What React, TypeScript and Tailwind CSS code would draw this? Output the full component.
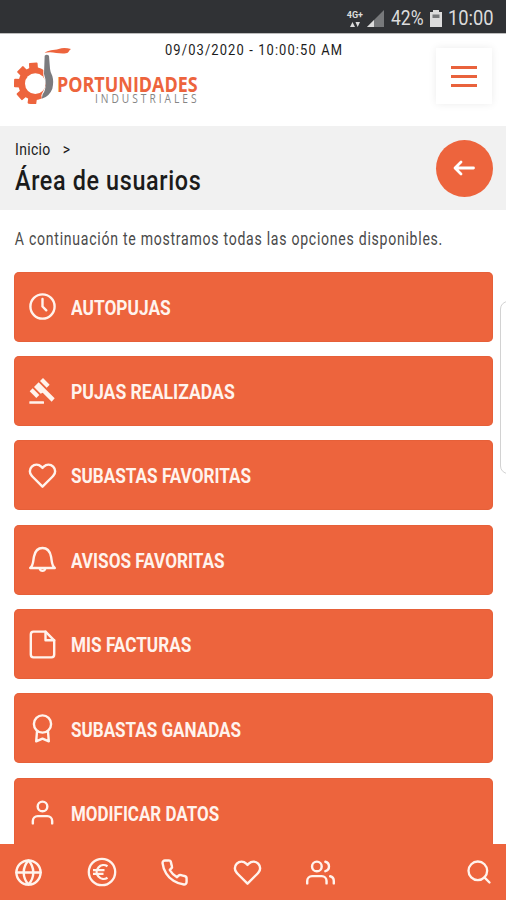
import type { ReactNode } from 'react';
import { FiGlobe, FiHeart, FiPhone, FiSearch, FiUser, FiUsers } from 'react-icons/fi';

function LineIcon({ children }: { children: ReactNode }) {
  return (
    <svg
      viewBox="0 0 29 29"
      className="size-[29px]"
      fill="none"
      stroke="currentColor"
      strokeWidth="2.4"
      strokeLinecap="round"
      strokeLinejoin="round"
    >
      {children}
    </svg>
  );
}

function ClockIcon() {
  return (
    <LineIcon>
      <circle cx="14.5" cy="14.5" r="12.1" />
      <path d="M14.5 7V14.5L18.3 18.3" />
    </LineIcon>
  );
}

function GavelIcon() {
  return (
    <svg viewBox="0 0 81 84" className="h-7 w-[27px]" fill="currentColor">
      <path d="M33 12 42 3 62 23 53 32Z" />
      <path d="M2 43 11 34 31 54 22 63Z" />
      <path d="M15 30 29 16 49 36 77 64 68 74 41 47 35 50Z" />
      <rect x="1" y="73" width="44" height="7" rx="1.5" />
    </svg>
  );
}

function HeartIcon() {
  return <FiHeart size={29} />;
}

function BellIcon() {
  return (
    <LineIcon>
      <path d="M2.2 23H26.8C23.5 20.5 24 16 23 11.5C22 6.5 19 3 14.5 3C10 3 7 6.5 6 11.5C5 16 5.5 20.5 2.2 23Z" />
      <path d="M11.8 23.8A2.8 2.8 0 0 0 17.2 23.8" />
    </LineIcon>
  );
}

function FileIcon() {
  return (
    <LineIcon>
      <path d="M17.5 1.6H5.5A2.8 2.8 0 0 0 2.8 4.4V24.6A2.8 2.8 0 0 0 5.5 27.4H23.5A2.8 2.8 0 0 0 26.2 24.6V10.3Z" />
      <path d="M17.5 1.6V10.3H26.2" />
    </LineIcon>
  );
}

function AwardIcon() {
  return (
    <LineIcon>
      <circle cx="14.5" cy="10" r="8.6" />
      <path d="M9 17.5 8.2 27.3 14.5 24.6 20.8 27.3 20 17.5" />
    </LineIcon>
  );
}

function UserIcon() {
  return <FiUser size={29} />;
}

function EuroIcon() {
  return (
    <svg viewBox="0 0 30 30" className="size-[30px]" fill="none" stroke="currentColor" strokeWidth="2.3">
      <circle cx="15" cy="15" r="13.2" />
      <path d="M20.5 9.3A6.9 6.9 0 1 0 20.5 20.7M6 13.2H17.5M6 16.8H16.5" />
    </svg>
  );
}

function Logo() {
  return (
    <div className="flex h-[58px]">
      <svg viewBox="12 12 174 174" className="size-[58px] shrink-0">
        <g fill="#ed643d">
          <circle cx="74" cy="125" r="49" />
          <rect x="61" y="62" width="26" height="28" rx="3" transform="rotate(-4 74 125)" />
          <rect x="61" y="62" width="26" height="28" rx="3" transform="rotate(-45 74 125)" />
          <rect x="61" y="63" width="26" height="28" rx="3" transform="rotate(-88 74 125)" />
          <rect x="61" y="63" width="26" height="28" rx="3" transform="rotate(-131 74 125)" />
          <rect x="61" y="63" width="26" height="28" rx="3" transform="rotate(-172 74 125)" />
        </g>
        <path d="M100 60H140V180H97L94 160 108 130 100 100Z" fill="#fff" />
        <circle cx="76" cy="125" r="31" fill="#fff" />
        <path
          d="M104 41Q110 36 117 41L120 80Q121 91 127 102Q132 119 127 140Q118 164 95 170L98 157Q107 146 107 126Q107 108 102 96Z"
          fill="#7b7b7e"
        />
        <path
          d="M104 33C113 24 132 25 146 21C158 17 170 18 183 21C174 28 178 32 168 34C152 37 135 31 120 31Q110 31 104 33Z"
          fill="#ed643d"
        />
      </svg>
      <div className="-ml-[15px] w-[142px] pt-[26px] whitespace-nowrap">
        <div className="h-[22px] origin-left scale-x-[0.815] font-['Open_Sans'] text-[22px] leading-[22px] font-bold text-[#ed643d]">
          PORTUNIDADES
        </div>
        <div className="h-3 pl-[37.5px] font-['Open_Sans'] text-[12px] leading-[10px] text-[#858585]">
          <span className="inline-block origin-left scale-x-[0.85] tracking-[3.5px]">INDUSTRIALES</span>
        </div>
      </div>
    </div>
  );
}

function StatusBar() {
  return (
    <div className="flex h-[34px] shrink-0 items-center justify-end border-b border-[#bdbdbd] bg-[#303235] pt-1 pr-3 text-[#dcdcdc]">
      <div className="mr-1 flex flex-col items-center">
        <span className="text-[9px] leading-[9px] font-bold">4G+</span>
        <svg viewBox="0 0 10 5" className="mt-0.5 h-[5px] w-2.5" fill="currentColor">
          <path d="M2.5 0 5 5H0ZM5.5 0H10L7.7 5Z" />
        </svg>
      </div>
      <svg viewBox="0 0 17 17" className="mr-[7px] size-[17px]">
        <path d="M17 0V17H0Z" fill="#77797b" />
        <path d="M7 10V17H0Z" fill="currentColor" />
      </svg>
      <span className="w-[34px] origin-left scale-x-[0.9] text-[19.5px]">42%</span>
      <svg viewBox="0 0 12 17" className="mr-[6px] ml-[5px] h-[17px] w-3" fill="currentColor">
        <path d="M3 0H9V2H12V17H0V2H3Z" />
        <path d="M2.5 4.5H9.5V8H2.5Z" fill="#77797b" />
      </svg>
      <span className="w-[46px] origin-left scale-x-[0.94] text-[19.5px]">10:00</span>
    </div>
  );
}

type MenuItem = {
  label: string;
  icon: () => ReactNode;
  // horizontal condensing of the label
  width: string;
};

const menuItems: MenuItem[] = [
  { label: 'AUTOPUJAS', icon: ClockIcon, width: 'scale-x-[0.845]' },
  { label: 'PUJAS REALIZADAS', icon: GavelIcon, width: 'scale-x-[0.858]' },
  { label: 'SUBASTAS FAVORITAS', icon: HeartIcon, width: 'scale-x-[0.836]' },
  { label: 'AVISOS FAVORITAS', icon: BellIcon, width: 'scale-x-[0.837]' },
  { label: 'MIS FACTURAS', icon: FileIcon, width: 'scale-x-[0.838]' },
  { label: 'SUBASTAS GANADAS', icon: AwardIcon, width: 'scale-x-[0.832]' },
  { label: 'MODIFICAR DATOS', icon: UserIcon, width: 'scale-x-[0.828]' },
];

export default function App() {
  return (
    <div className="relative flex h-[900px] w-[506px] flex-col overflow-hidden bg-white font-[Roboto,sans-serif] text-[#1b1b1b]">
      <StatusBar />

      {/* Header */}
      <header className="flex h-[92px] shrink-0 pl-3.5">
        <div className="w-[151px] pt-3">
          <Logo />
        </div>
        <div className="w-[271px] pt-[4px] whitespace-nowrap">
          <span className="inline-block origin-left scale-x-[0.86] text-[15px] leading-4 tracking-[1.3px]">
            09/03/2020 - 10:00:50 AM
          </span>
        </div>
        <button className="mt-3.5 flex h-14 w-14 flex-col items-center justify-center gap-[6px] bg-white shadow-[0_0_8px_rgba(0,0,0,0.08)]">
          <span className="h-[3px] w-[26px] bg-[#e9623c]" />
          <span className="h-[3px] w-[26px] bg-[#e9623c]" />
          <span className="h-[3px] w-[26px] bg-[#e9623c]" />
        </button>
      </header>

      {/* Breadcrumb and title */}
      <section className="flex h-[84px] shrink-0 items-center justify-between bg-[#f1f1f1] pr-[13.5px] pl-[15px]">
        <div className="whitespace-nowrap">
          <div className="flex h-5 origin-left scale-x-[0.87] items-center gap-3.5 pt-0.5 text-base tracking-[0.4px]">
            <span>Inicio</span>
            <span>&gt;</span>
          </div>
          <h1 className="mt-1.5 origin-left scale-x-[0.865] text-[27px] leading-8 font-medium tracking-[0.75px]">
            Área de usuarios
          </h1>
        </div>
        <button className="flex size-[57px] items-center justify-center rounded-full bg-[#ed643d] text-white">
          <svg
            viewBox="0 0 22 16"
            className="h-4 w-[22px]"
            fill="none"
            stroke="currentColor"
            strokeWidth="2.8"
            strokeLinecap="round"
            strokeLinejoin="round"
          >
            <path d="M20.5 8H2.5M8 2 2 8 8 14" />
          </svg>
        </button>
      </section>

      <main className="min-h-0 flex-1 overflow-hidden px-[14px]">
        <p className="mt-[17px] mb-[20.5px] h-6 origin-left scale-x-[0.805] pl-px text-[17.5px] leading-6 tracking-[0.9px] whitespace-nowrap text-[#4a4a4a]">
          A continuación te mostramos todas las opciones disponibles.
        </p>
        <div className="flex flex-col gap-[14.4px] pl-[0.4px]">
          {menuItems.map(({ label, icon: Icon, width }) => (
            <button
              key={label}
              className="flex h-[70px] w-[478.5px] shrink-0 items-center rounded-[5px] bg-[#ed643d] text-[#fff3ed] ring-1 ring-[#dc5a34]/40 ring-inset"
            >
              <span className="mr-[0.8px] flex w-14 justify-center">
                <Icon />
              </span>
              <span className={`origin-left pt-[3px] text-[20.5px] font-bold whitespace-nowrap ${width}`}>
                {label}
              </span>
            </button>
          ))}
        </div>
      </main>

      {/* Bottom navigation */}
      <nav className="flex h-14 shrink-0 items-center bg-[#ed643d] pr-[13px] pl-3.5 text-[#fff3ed]">
        <FiGlobe size={29} className="mr-11" />
        <EuroIcon />
        <FiPhone size={29} className="ml-[43px]" />
        <FiHeart size={29} className="ml-11" />
        <FiUsers size={29} className="ml-11" />
        <FiSearch size={28} className="ml-auto" />
      </nav>

      {/* Side drawer edge */}
      <div className="absolute top-[301px] -right-5 h-[173px] w-[26px] rounded-[8px] border border-[#d2d2d2] bg-white" />
    </div>
  );
}
